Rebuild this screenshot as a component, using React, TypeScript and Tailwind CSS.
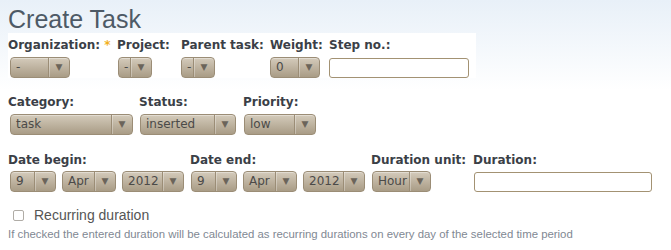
const labelCls =
  "block text-[12px] leading-[16px] font-bold text-[#3b3f47] whitespace-nowrap [font-family:'DejaVu_Sans',sans-serif]";

const Select = ({ value, w, ml = "" }: { value: string; w: string; ml?: string }) => (
  <div
    className={`${w} ${ml} h-[21px] flex items-stretch rounded-[4px] border border-[#9b8d76] bg-gradient-to-b from-[#d4cbbb] to-[#a99c86] shadow-[inset_0_1px_0_rgba(255,255,255,0.35)] text-[12px] text-[#4b4a48] [font-family:'DejaVu_Sans',sans-serif]`}
  >
    <span className="flex-1 pl-[5px] leading-[19px] overflow-hidden whitespace-nowrap">{value}</span>
    <span className="w-[21px] flex items-center justify-center border-l border-[#9b8d76] shadow-[inset_1px_0_0_rgba(255,255,255,0.3)] text-[9px] text-[#6b645a]">
      ▼
    </span>
  </div>
);

const Input = ({ w }: { w: string }) => (
  <div className={`${w} h-[20px] rounded-[3px] border border-[#a39273] bg-white`} />
);

export default function App() {
  return (
    <div className="w-[671px] h-[250px] overflow-hidden bg-gradient-to-b from-[#e8f0f8] to-white to-[90px] bg-no-repeat [background-size:100%_90px] bg-white">
      <h1 className="pl-[8px] pt-[6px] h-[33px] text-[25px] leading-[26px] text-[#4e5a66] [font-family:'Liberation_Sans',sans-serif]">
        Create Task
      </h1>
      <div className="ml-[8px] w-[468px] bg-white pt-[4px]">
        <div className="flex">
          <div className="w-[109px]">
            <span className={labelCls}>
              Organization: <span className="text-[#f2b01e]">*</span>
            </span>
            <div className="mt-[4px]">
              <Select value="-" w="w-[60px]" ml="ml-[2px]" />
            </div>
          </div>
          <div className="w-[64px]">
            <span className={labelCls}>Project:</span>
            <div className="mt-[4px]">
              <Select value="-" w="w-[34px]" ml="ml-[1px]" />
            </div>
          </div>
          <div className="w-[89px]">
            <span className={labelCls}>Parent task:</span>
            <div className="mt-[4px]">
              <Select value="-" w="w-[34px]" />
            </div>
          </div>
          <div className="w-[59px]">
            <span className={labelCls}>Weight:</span>
            <div className="mt-[4px]">
              <Select value="0" w="w-[50px]" />
            </div>
          </div>
          <div>
            <span className={labelCls}>Step no.:</span>
            <div className="mt-[5px]">
              <Input w="w-[140px]" />
            </div>
          </div>
        </div>
      </div>

      <div className="ml-[8px] mt-[16px] flex">
        <div className="w-[131px]">
          <span className={labelCls}>Category:</span>
          <div className="mt-[4px]">
            <Select value="task" w="w-[123px]" ml="ml-[2px]" />
          </div>
        </div>
        <div className="w-[104px]">
          <span className={labelCls}>Status:</span>
          <div className="mt-[4px]">
            <Select value="inserted" w="w-[96px]" ml="ml-[1px]" />
          </div>
        </div>
        <div>
          <span className={labelCls}>Priority:</span>
          <div className="mt-[4px]">
            <Select value="low" w="w-[72px]" ml="ml-[1px]" />
          </div>
        </div>
      </div>

      <div className="ml-[8px] mt-[17px] flex">
        <div className="w-[182px]">
          <span className={labelCls}>Date begin:</span>
          <div className="mt-[3px] ml-[2px] flex gap-[6px]">
            <Select value="9" w="w-[46px]" />
            <Select value="Apr" w="w-[54px]" />
            <Select value="2012" w="w-[62px]" />
          </div>
        </div>
        <div className="w-[181px]">
          <span className={labelCls}>Date end:</span>
          <div className="mt-[3px] ml-[1px] flex gap-[6px]">
            <Select value="9" w="w-[46px]" />
            <Select value="Apr" w="w-[54px]" />
            <Select value="2012" w="w-[62px]" />
          </div>
        </div>
        <div className="w-[102px]">
          <span className={labelCls}>Duration unit:</span>
          <div className="mt-[3px] ml-[1px]">
            <Select value="Hour" w="w-[59px]" />
          </div>
        </div>
        <div>
          <span className={labelCls}>Duration:</span>
          <div className="mt-[4px] ml-[1px]">
            <Input w="w-[178px]" />
          </div>
        </div>
      </div>

      <div className="ml-[13px] mt-[15px] flex items-center gap-[10px]">
        <span className="w-[11px] h-[11px] rounded-[2px] border border-[#b0aca6] bg-white" />
        <span className="text-[14px] leading-[17px] text-[#555555] [font-family:'Liberation_Sans',sans-serif]">
          Recurring duration
        </span>
      </div>
      <p className="ml-[8px] mt-[3px] text-[11.4px] leading-[14px] text-[#7f8893] whitespace-nowrap [font-family:'Liberation_Sans',sans-serif]">
        If checked the entered duration will be calculated as recurring durations on every day of the selected time period
      </p>
    </div>
  );
}
